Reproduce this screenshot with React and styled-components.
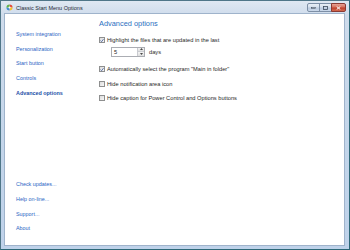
import React from 'react';
import styled, { createGlobalStyle } from 'styled-components';

const GlobalStyle = createGlobalStyle`
  html, body {
    margin: 0;
    padding: 0;
    width: 350px;
    height: 250px;
    overflow: hidden;
    background: #ffffff;
  }
  * { box-sizing: border-box; }
`;

const Window = styled.div`
  width: 350px;
  height: 250px;
  display: flex;
  flex-direction: column;
  background: linear-gradient(180deg, #dfe8f2 0px, #cfdcec 14px, #c3d5ea 60%, #bfd2ea 100%);
  border: 1px solid #4f7688;
  border-bottom-color: #2d6878;
  border-right-color: #2d6878;
  font-family: "Liberation Sans", Arial, sans-serif;
`;

const TitleBar = styled.div`
  height: 12px;
  display: flex;
  align-items: center;
  padding-left: 5px;
  gap: 3px;
`;

const TitleText = styled.span`
  font-size: 5.5px;
  color: #1e2a36;
  flex: 1;
  padding-top: 1px;
`;

const Controls = styled.div`
  display: flex;
  align-self: flex-start;
  margin-top: 2px;
  margin-right: 3px;
`;

const CaptionButton = styled.div`
  width: ${p => (p.$close ? '15px' : '13px')};
  height: 9px;
  display: flex;
  align-items: center;
  justify-content: center;
  border: 1px solid ${p => (p.$close ? '#8a3a34' : '#7d8fa6')};
  margin-left: -1px;
  border-radius: ${p => (p.$first ? '2px 0 0 2px' : p.$close ? '0 2px 2px 0' : '0')};
  background: ${p =>
    p.$close
      ? 'linear-gradient(180deg, #e8a395 0%, #d4705e 45%, #c0402c 55%, #d2694f 100%)'
      : 'linear-gradient(180deg, #e9eff6 0%, #d4dfec 45%, #bccbdf 55%, #cad8ea 100%)'};
`;

const Client = styled.div`
  flex: 1;
  margin: 0 4px 3px 3px;
  background: #ffffff;
  border: 1px solid #9fb3cb;
  display: grid;
  grid-template-columns: 90px 1fr;
`;

const Sidebar = styled.nav`
  display: flex;
  flex-direction: column;
  justify-content: space-between;
  padding: 13px 0 9px 11px;
`;

const LinkGroup = styled.div`
  display: flex;
  flex-direction: column;
`;

const NavLink = styled.a`
  font-size: 5.4px;
  line-height: 14.7px;
  color: ${p => (p.$active ? '#1c4fa8' : '#2a64c4')};
  font-weight: ${p => (p.$active ? 'bold' : 'normal')};
  text-decoration: none;
  white-space: nowrap;
`;

const Main = styled.section`
  display: flex;
  flex-direction: column;
  padding: 5px 0 0 4px;
`;

const Heading = styled.h1`
  margin: 0;
  font-size: 7.4px;
  line-height: 10px;
  font-weight: normal;
  color: #2b6fc0;
`;

const Option = styled.label`
  display: flex;
  align-items: center;
  gap: 2px;
  height: 8px;
  margin-top: ${p => p.$top}px;
  font-size: 5.7px;
  color: #1f1f1f;
  white-space: nowrap;
`;

const Box = styled.span`
  width: 6px;
  height: 6px;
  flex: none;
  display: flex;
  align-items: center;
  justify-content: center;
  border: 1px solid #8e8f8f;
  background: linear-gradient(135deg, #dcdcdc 0%, #f6f6f6 100%);
`;

const SpinRow = styled.div`
  display: flex;
  align-items: center;
  gap: 4px;
  margin: 2.5px 0 0 12px;
  font-size: 5.7px;
  color: #1f1f1f;
`;

const SpinBox = styled.div`
  width: 34px;
  height: 10px;
  display: flex;
  border: 1px solid #abadb3;
  background: #ffffff;
`;

const SpinValue = styled.span`
  flex: 1;
  font-size: 5.7px;
  line-height: 8px;
  padding-left: 2px;
`;

const SpinButtons = styled.div`
  width: 7px;
  display: flex;
  flex-direction: column;
  border-left: 1px solid #c9cbd0;
`;

const SpinButton = styled.div`
  flex: 1;
  display: flex;
  align-items: center;
  justify-content: center;
  background: linear-gradient(180deg, #f4f4f4, #dedede);
  & + & { border-top: 1px solid #c9cbd0; }
`;

const Check = ({ checked }) => (
  <Box>
    {checked && (
      <svg width="5" height="5" viewBox="0 0 5 5">
        <path d="M0.6 2.6 L2 4 L4.4 0.8" fill="none" stroke="#3d5b9b" strokeWidth="1" />
      </svg>
    )}
  </Box>
);

const AppIcon = () => (
  <svg width="7" height="7" viewBox="0 0 8 8">
    <path d="M4 4 L4 0.5 A3.5 3.5 0 0 1 7.5 4 Z" fill="#e34a3a" />
    <path d="M4 4 L7.5 4 A3.5 3.5 0 0 1 4 7.5 Z" fill="#f2c230" />
    <path d="M4 4 L4 7.5 A3.5 3.5 0 0 1 0.5 4 Z" fill="#3c8ad8" />
    <path d="M4 4 L0.5 4 A3.5 3.5 0 0 1 4 0.5 Z" fill="#5cb548" />
    <circle cx="4" cy="4" r="1.2" fill="#ffffff" />
  </svg>
);

const Arrow = ({ up }) => (
  <svg width="3" height="2" viewBox="0 0 3 2">
    <path d={up ? 'M0 2 L1.5 0 L3 2 Z' : 'M0 0 L1.5 2 L3 0 Z'} fill="#4a4a4a" />
  </svg>
);

const topLinks = ['System integration', 'Personalization', 'Start button', 'Controls', 'Advanced options'];
const bottomLinks = ['Check updates...', 'Help on-line...', 'Support...', 'About'];

export default function App() {
  return (
    <>
      <GlobalStyle />
      <Window>
        <TitleBar>
          <AppIcon />
          <TitleText>Classic Start Menu Options</TitleText>
          <Controls>
            <CaptionButton $first>
              <svg width="5" height="2" viewBox="0 0 5 2">
                <rect x="0.5" y="0.5" width="4" height="1" fill="#fff" stroke="#3b4a5c" strokeWidth="0.6" />
              </svg>
            </CaptionButton>
            <CaptionButton>
              <svg width="5" height="4" viewBox="0 0 5 4">
                <rect x="0.5" y="0.5" width="4" height="3" fill="none" stroke="#3b4a5c" strokeWidth="0.8" />
              </svg>
            </CaptionButton>
            <CaptionButton $close>
              <svg width="5" height="4" viewBox="0 0 5 4">
                <path d="M0.7 0.5 L4.3 3.5 M4.3 0.5 L0.7 3.5" stroke="#ffffff" strokeWidth="1" />
              </svg>
            </CaptionButton>
          </Controls>
        </TitleBar>
        <Client>
          <Sidebar>
            <LinkGroup>
              {topLinks.map(l => (
                <NavLink key={l} $active={l === 'Advanced options'}>{l}</NavLink>
              ))}
            </LinkGroup>
            <LinkGroup>
              {bottomLinks.map(l => (
                <NavLink key={l}>{l}</NavLink>
              ))}
            </LinkGroup>
          </Sidebar>
          <Main>
            <Heading>Advanced options</Heading>
            <Option $top={7}>
              <Check checked />
              Highlight the files that are updated in the last
            </Option>
            <SpinRow>
              <SpinBox>
                <SpinValue>5</SpinValue>
                <SpinButtons>
                  <SpinButton><Arrow up /></SpinButton>
                  <SpinButton><Arrow /></SpinButton>
                </SpinButtons>
              </SpinBox>
              days
            </SpinRow>
            <Option $top={8.5}>
              <Check checked />
              Automatically select the program "Main in folder"
            </Option>
            <Option $top={6.5}>
              <Check />
              Hide notification area icon
            </Option>
            <Option $top={6.5}>
              <Check />
              Hide caption for Power Control and Options buttons
            </Option>
          </Main>
        </Client>
      </Window>
    </>
  );
}
